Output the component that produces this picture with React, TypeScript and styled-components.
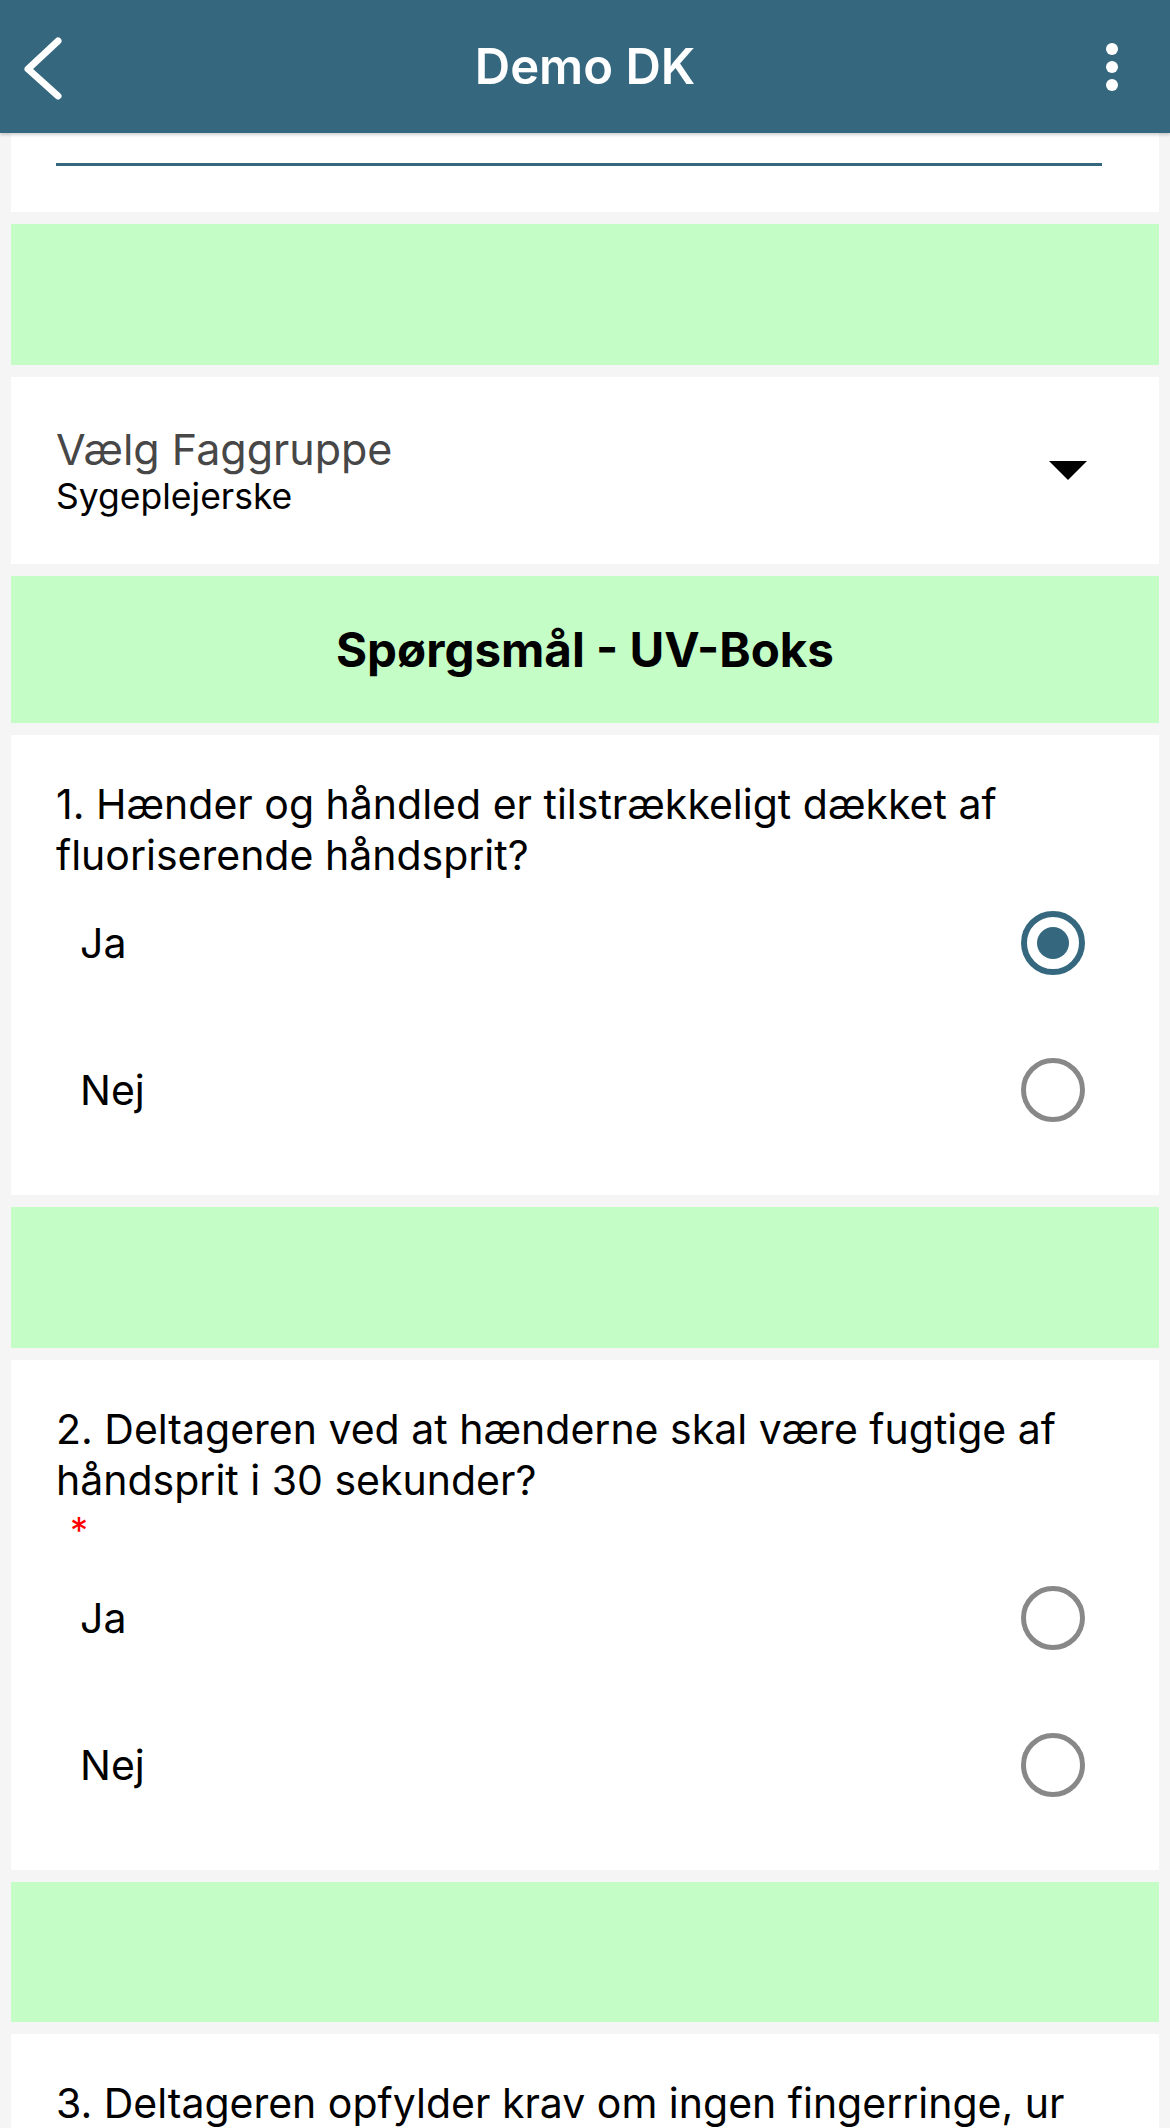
import React from "react";
import styled, { createGlobalStyle } from "styled-components";

const Global = createGlobalStyle`
  html, body { margin: 0; padding: 0; background: #f5f5f5; }
  body { font-family: Inter, "Liberation Sans", Arial, sans-serif; color: #000; -webkit-font-smoothing: antialiased; }
  * { box-sizing: border-box; }
`;

const Page = styled.div`
  display: flex;
  flex-direction: column;
  background: #f5f5f5;
  min-height: 2128px;
`;

const Header = styled.header`
  height: 133px;
  background: #35687f;
  display: grid;
  grid-template-columns: 1fr auto 1fr;
  align-items: center;
  box-shadow: 0 2px 3px rgba(0, 0, 0, 0.18);
  position: relative;
  z-index: 2;
`;

const HeaderLeft = styled.div`
  display: flex;
  justify-content: flex-start;
  padding-left: 20px;
`;

const HeaderRight = styled.div`
  display: flex;
  justify-content: flex-end;
  padding-right: 48px;
`;

const IconButton = styled.button`
  background: none;
  border: 0;
  padding: 0;
  margin: 0;
  display: flex;
  cursor: pointer;
`;

const Title = styled.h1`
  margin: 0;
  font-size: 49px;
  font-weight: 600;
  color: #fff;
  letter-spacing: 0;
`;

const Content = styled.main`
  display: flex;
  flex-direction: column;
  gap: 12px;
  padding: 0 11px 40px;
`;

const Card = styled.section`
  background: #fff;
  padding: 0 45px;
`;

const TopCard = styled(Card)`
  height: 79px;
  padding: 30px 57px 0 45px;
`;

const Underline = styled.div`
  height: 3px;
  background: #35687f;
`;

const GreenBar = styled.div<{ $h: number }>`
  background: #c5fdc7;
  height: ${(p) => p.$h}px;
  display: flex;
  align-items: center;
  justify-content: center;
`;

const SectionTitle = styled.h2`
  margin: 0;
  font-size: 47.5px;
  font-weight: 700;
  color: #000;
`;

const SelectCard = styled(Card)`
  height: 187px;
  display: flex;
  align-items: center;
  justify-content: space-between;
  padding: 0 72px 0 45px;
`;

const SelectText = styled.div`
  display: flex;
  flex-direction: column;
`;

const SelectLabel = styled.div`
  font-size: 43px;
  line-height: 52px;
  color: #474747;
`;

const SelectValue = styled.div`
  font-size: 35.5px;
  line-height: 44px;
  color: #000;
`;

const Caret = styled.div`
  width: 0;
  height: 0;
  border-left: 19px solid transparent;
  border-right: 19px solid transparent;
  border-top: 19px solid #000;
`;

const QuestionCard = styled(Card)`
  padding: 44px 45px 50px;
  display: flex;
  flex-direction: column;
`;

const QuestionText = styled.p`
  margin: 0;
  font-size: 41px;
  line-height: 51px;
  color: #000;
`;

const Required = styled.div`
  height: 50px;
  padding: 6px 0 0 14px;
  color: #ff0000;
  font-size: 36px;
  line-height: 36px;
`;

const Options = styled.div`
  display: flex;
  flex-direction: column;
  gap: 37px;
  margin-top: 7px;
`;

const OptionRow = styled.label`
  height: 110px;
  display: flex;
  align-items: center;
  justify-content: space-between;
  padding: 0 29px 0 24px;
  cursor: pointer;
`;

const OptionText = styled.span`
  font-size: 41px;
  color: #000;
`;

const Radio = styled.span<{ $checked: boolean }>`
  width: 64px;
  height: 64px;
  border-radius: 50%;
  border: ${(p) => (p.$checked ? "6px solid #35687f" : "5.5px solid #888888")};
  display: flex;
  align-items: center;
  justify-content: center;
  flex: none;
`;

const RadioDot = styled.span`
  width: 32px;
  height: 32px;
  border-radius: 50%;
  background: #35687f;
`;

type Q = { text: string; required?: boolean; answer?: string };

const questions: Q[] = [
  { text: "1. Hænder og håndled er tilstrækkeligt dækket af fluoriserende håndsprit?", answer: "Ja" },
  { text: "2. Deltageren ved at hænderne skal være fugtige af håndsprit i 30 sekunder?", required: true },
  { text: "3. Deltageren opfylder krav om ingen fingerringe, ur og armbånd?" },
];

function Question({ q }: { q: Q }) {
  return (
    <QuestionCard>
      <QuestionText>{q.text}</QuestionText>
      {q.required && <Required>*</Required>}
      <Options>
        {["Ja", "Nej"].map((o) => (
          <OptionRow key={o}>
            <OptionText>{o}</OptionText>
            <Radio $checked={q.answer === o}>{q.answer === o && <RadioDot />}</Radio>
          </OptionRow>
        ))}
      </Options>
    </QuestionCard>
  );
}

export default function App() {
  return (
    <>
      <Global />
      <Page>
        <Header>
          <HeaderLeft>
            <IconButton aria-label="Tilbage">
              <svg width="48" height="72" viewBox="0 0 48 72" style={{ marginTop: 2 }}>
                <polyline points="38,9 8,37 38,64" fill="none" stroke="#fff" strokeWidth="7" strokeLinecap="round" strokeLinejoin="round" />
              </svg>
            </IconButton>
          </HeaderLeft>
          <Title>Demo DK</Title>
          <HeaderRight>
            <IconButton aria-label="Menu">
              <svg width="20" height="60" viewBox="0 0 20 60">
                <circle cx="10" cy="12" r="6" fill="#fff" />
                <circle cx="10" cy="30" r="6" fill="#fff" />
                <circle cx="10" cy="48" r="6" fill="#fff" />
              </svg>
            </IconButton>
          </HeaderRight>
        </Header>
        <Content>
          <TopCard>
            <Underline />
          </TopCard>
          <GreenBar $h={141} />
          <SelectCard>
            <SelectText>
              <SelectLabel>Vælg Faggruppe</SelectLabel>
              <SelectValue>Sygeplejerske</SelectValue>
            </SelectText>
            <Caret />
          </SelectCard>
          <GreenBar $h={147}>
            <SectionTitle>Spørgsmål - UV-Boks</SectionTitle>
          </GreenBar>
          <Question q={questions[0]} />
          <GreenBar $h={141} />
          <Question q={questions[1]} />
          <GreenBar $h={140} />
          <Question q={questions[2]} />
        </Content>
      </Page>
    </>
  );
}
